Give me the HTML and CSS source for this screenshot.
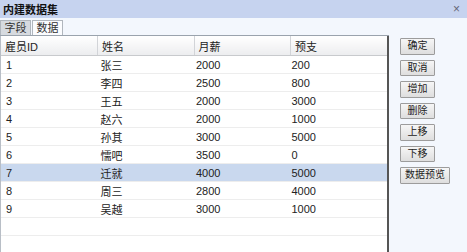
FILE: index.html
```html
<!DOCTYPE html>
<html lang="zh">
<head>
    <meta charset="UTF-8">
    <title>内建数据集</title>
    <link rel="stylesheet" href="styles.css">
</head>
<body>
    <div class="titlebar">
        <span class="title">内建数据集</span>
        <span class="close">×</span>
    </div>
    <div class="main">
        <div class="left">
            <div class="tabs">
                <div class="tab">字段</div>
                <div class="tab active">数据</div>
            </div>
            <div class="panel">
                <table class="grid">
                    <thead>
                        <tr><th>雇员ID</th><th>姓名</th><th>月薪</th><th>预支</th></tr>
                    </thead>
                    <tbody>
                        <tr><td>1</td><td>张三</td><td>2000</td><td>200</td></tr>
                        <tr><td>2</td><td>李四</td><td>2500</td><td>800</td></tr>
                        <tr><td>3</td><td>王五</td><td>2000</td><td>3000</td></tr>
                        <tr><td>4</td><td>赵六</td><td>2000</td><td>1000</td></tr>
                        <tr><td>5</td><td>孙其</td><td>3000</td><td>5000</td></tr>
                        <tr><td>6</td><td>懦吧</td><td>3500</td><td>0</td></tr>
                        <tr class="selected"><td>7</td><td>迁就</td><td>4000</td><td>5000</td></tr>
                        <tr><td>8</td><td>周三</td><td>2800</td><td>4000</td></tr>
                        <tr><td>9</td><td>吴越</td><td>3000</td><td>1000</td></tr>
                        <tr class="empty"><td></td><td></td><td></td><td></td></tr>
                        <tr class="empty"><td></td><td></td><td></td><td></td></tr>
                    </tbody>
                </table>
            </div>
        </div>
        <div class="buttons">
            <button>确定</button>
            <button>取消</button>
            <button>增加</button>
            <button>删除</button>
            <button>上移</button>
            <button>下移</button>
            <button>数据预览</button>
        </div>
    </div>
</body>
</html>
```

FILE: styles.css
```css
body {
    margin: 0;
    font-family: "Liberation Sans", "Noto Sans CJK SC", sans-serif;
    font-size: 11px;
    color: #222;
    background-color: #f3f7fd;
    height: 252px;
    overflow: hidden;
}
.titlebar {
    height: 18px;
    background-color: #c6d3ef;
    display: flex;
    align-items: center;
    justify-content: space-between;
    padding: 0 7px 0 3px;
}
.title {
    font-weight: bold;
    font-size: 11px;
    color: #111;
}
.close {
    color: #667;
    font-size: 12px;
}
.main {
    display: flex;
    height: 234px;
}
.left {
    width: 389px;
    display: flex;
    flex-direction: column;
}
.tabs {
    display: flex;
    height: 18px;
    padding-top: 2px;
    box-sizing: border-box;
    border-bottom: 1px solid #9aa3ad;
}
.tab {
    width: 29px;
    text-align: center;
    line-height: 15px;
    background-color: #d6dadf;
    border: 1px solid #b0b6bd;
    border-bottom: none;
    color: #333;
}
.tab.active {
    background-color: #fbfcfe;
    margin-left: 1px;
}
.panel {
    flex: 1;
    background: white;
    border-left: 1px solid #b8bec6;
    border-right: 2px solid #555;
    overflow: hidden;
}
.grid {
    width: 100%;
    border-collapse: collapse;
    table-layout: fixed;
}
.grid th {
    height: 19px;
    padding: 0 0 0 4px;
    text-align: left;
    font-weight: normal;
    background: linear-gradient(#ffffff, #ecedef);
    border-right: 1px solid #d2d4d8;
    border-bottom: 1px solid #c8cacd;
    color: #222;
}
.grid th:last-child {
    border-right: none;
}
.grid td {
    height: 17px;
    padding: 0 0 0 5px;
    border-bottom: 1px solid #ededed;
    color: #222;
}
.grid td:nth-child(2) {
    padding-left: 3px;
}
.grid td:nth-child(3) {
    padding-left: 2px;
}
.grid td:nth-child(4) {
    padding-left: 1px;
}
.grid tr.selected td {
    background-color: #c9d8ee;
}
.buttons {
    display: flex;
    flex-direction: column;
    align-items: flex-start;
    gap: 5px;
    padding: 20px 0 0 11px;
}
button {
    font-family: "Liberation Sans", "Noto Sans CJK SC", sans-serif;
    font-size: 10px;
    height: 16.5px;
    min-width: 35px;
    padding: 0 4px;
    line-height: 14px;
    background: linear-gradient(#f6f6f6, #dedede);
    border: 1px solid #9c9c9c;
    border-radius: 1px;
    color: #222;
}
```
